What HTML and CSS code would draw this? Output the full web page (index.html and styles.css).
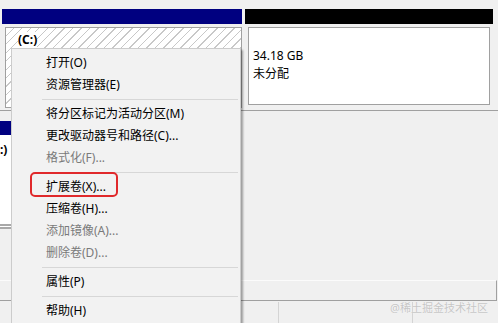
FILE: index.html
```html
<!DOCTYPE html>
<html lang="zh-CN">
<head>
    <meta charset="UTF-8">
    <meta name="viewport" content="width=device-width, initial-scale=1.0">
    <title>磁盘管理</title>
    <link rel="stylesheet" href="styles.css">
</head>
<body>
    <div class="window">
        <div class="disk disk-top">
            <div class="part part-c">
                <div class="bar bar-navy"></div>
                <div class="part-body">
                    <div class="hatch"><b>(C:)</b></div>
                </div>
            </div>
            <div class="part part-free">
                <div class="bar bar-black"></div>
                <div class="part-body">
                    <div class="free-box">
                        <p>34.18 GB</p>
                        <p>未分配</p>
                    </div>
                </div>
            </div>
        </div>

        <div class="disk disk-second">
            <div class="part part-cd">
                <div class="bar bar-navy small"></div>
                <div class="cd-box"><b>:)</b></div>
            </div>
        </div>

        <div class="band"></div>

        <div class="status">
            <div class="cell"></div>
            <div class="cell"></div>
            <div class="cell"></div>
        </div>

        <div class="watermark">@稀土掘金技术社区</div>

        <!-- 右键菜单 -->
        <ul class="menu">
            <li>打开(O)</li>
            <li>资源管理器(E)</li>
            <li class="sep"></li>
            <li>将分区标记为活动分区(M)</li>
            <li>更改驱动器号和路径(C)...</li>
            <li class="off">格式化(F)...</li>
            <li class="sep"></li>
            <li class="marked">扩展卷(X)...<span class="mark"></span></li>
            <li>压缩卷(H)...</li>
            <li class="off">添加镜像(A)...</li>
            <li class="off">删除卷(D)...</li>
            <li class="sep"></li>
            <li>属性(P)</li>
            <li class="sep"></li>
            <li>帮助(H)</li>
        </ul>
    </div>
</body>
</html>
```

FILE: styles.css
```css
body {
    margin: 0;
    background-color: #f0f0f0;
    font-family: "Noto Sans", "Noto Sans CJK SC", sans-serif;
    font-size: 12px;
    color: #000;
    overflow: hidden;
}
.window {
    position: relative;
    width: 498px;
    height: 323px;
    overflow: hidden;
}
.disk-top {
    display: flex;
    gap: 3px;
    height: 101px;
    padding: 9px 0 0 2px;
    border-bottom: 1px solid #a0a0a0;
}
.part-c {
    width: 240px;
}
.part-free {
    width: 248px;
}
.bar {
    height: 15px;
}
.bar-navy {
    background-color: #000080;
}
.bar-black {
    background-color: #000;
}
.part-c .part-body {
    padding: 3px 0 0 3px;
}
.hatch {
    box-sizing: border-box;
    height: 81px;
    border: 1px solid #a0a0a0;
    padding: 3px 0 0 12px;
    background: repeating-linear-gradient(135deg, #fff 0, #fff 5px, #c8c8c8 5px, #c8c8c8 6px);
}
.hatch b {
    display: inline-block;
    background: #fff;
    line-height: 16px;
    font-size: 12px;
}
.part-free .part-body {
    padding: 3px 3px 0 3px;
}
.free-box {
    box-sizing: border-box;
    height: 78px;
    border: 1px solid #a0a0a0;
    background: #fff;
    padding: 19px 0 0 4px;
}
.free-box p {
    margin: 0;
    line-height: 18px;
}
.disk-second {
    height: 169px;
    padding-top: 10px;
    box-sizing: border-box;
}
.part-cd {
    width: 230px;
}
.bar.small {
    height: 14px;
}
.cd-box {
    height: 83px;
    background: #fff;
    border-bottom: 5px double #a8a8a8;
    padding-top: 6px;
    box-sizing: content-box;
}
.band {
    box-sizing: border-box;
    width: 497px;
    height: 21px;
    border-top: 1px solid #fbfbfb;
    border-bottom: 1px solid #a0a0a0;
    border-right: 1px solid #a0a0a0;
}
.status {
    display: grid;
    grid-template-columns: 278px 134px 1fr;
    height: 22px;
    margin-top: 1px;
}
.status .cell + .cell {
    border-left: 1px solid #d4d4d4;
}
.watermark {
    position: absolute;
    right: 10px;
    bottom: 8px;
    font-size: 11px;
    color: #c6c6c6;
    text-shadow: 0 0 1px #fff;
}
.menu {
    position: absolute;
    left: 11px;
    top: 48px;
    width: 230px;
    box-sizing: border-box;
    margin: 0;
    padding: 3px 0 6px;
    list-style: none;
    background-color: #f2f2f2;
    border: 1px solid #cccccc;
    box-shadow: 2px 2px 2px rgba(0, 0, 0, 0.35);
}
.menu li {
    height: 22px;
    line-height: 22px;
    padding-left: 34px;
    white-space: nowrap;
}
.menu li.off {
    color: #7a7a7a;
}
.menu li.sep {
    height: 1px;
    padding: 0;
    margin: 3px 2px 3px 30px;
    background-color: #d7d7d7;
}
.menu li.marked {
    position: relative;
}
.mark {
    position: absolute;
    left: 18px;
    top: -4px;
    width: 88px;
    height: 25px;
    box-sizing: border-box;
    border: 2px solid #e0292b;
    border-radius: 5px;
}
```
